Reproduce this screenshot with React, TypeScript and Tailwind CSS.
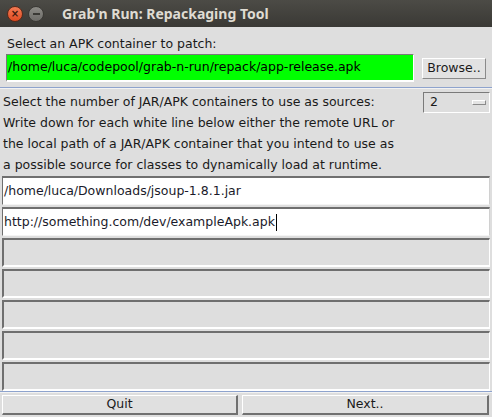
export default function App() {
  const sources = [
    '/home/luca/Downloads/jsoup-1.8.1.jar',
    'http://something.com/dev/exampleApk.apk',
  ];
  const blanks = [0, 1, 2, 3, 4];

  return (
    <div className="w-[492px] h-[417px] bg-[#dedede] flex flex-col overflow-hidden text-[12.5px] text-[#1a1a1a] font-['DejaVu_Sans',sans-serif]">
      {/* Title bar */}
      <div className="h-[27px] shrink-0 bg-gradient-to-b from-[#4c4b46] to-[#3a3935] flex items-center pl-[7px] gap-[5px]">
        <div className="w-[16px] h-[16px] rounded-full bg-gradient-to-b from-[#f37a53] to-[#df4a1f] border border-[#5a2a1a] flex items-center justify-center text-[#3b1a0e] text-[10px] leading-none font-bold">
          ×
        </div>
        <div className="w-[16px] h-[16px] rounded-full bg-gradient-to-b from-[#8c8b86] to-[#6d6c68] border border-[#3a3935] flex items-center justify-center">
          <div className="w-[7px] h-[2px] bg-[#3a3935]" />
        </div>
        <span className="ml-[13px] text-[14px] font-bold text-[#dfdbd2] font-['Noto_Sans',sans-serif]">
          Grab'n Run: Repackaging Tool
        </span>
      </div>

      {/* Target APK */}
      <div className="h-[60px] shrink-0 flex flex-col px-[6px] pt-[7px]">
        <div className="pl-[1px] h-[19px] leading-[19px]">Select an APK container to patch:</div>
        <div className="flex items-center mt-[1px]">
          <div className="w-[408px] h-[28px] bg-[#00ff00] border-t border-l border-[#7a7a7a] border-b-2 border-r border-b-white border-r-white flex items-center pl-[1px] text-black">
            /home/luca/codepool/grab-n-run/repack/app-release.apk
          </div>
          <button className="ml-[8px] w-[64px] h-[21px] bg-[#e2e2e2] border border-t-white border-l-white border-b-[#8a8a8a] border-r-[#8a8a8a] text-[#1a1a1a] flex items-center justify-center">
            Browse..
          </button>
        </div>
      </div>

      <div className="h-px shrink-0 bg-[#8ea3cd]" />
      <div className="h-px shrink-0 bg-[#f2f2f2]" />

      {/* Sources */}
      <div className="flex-1 flex flex-col px-[2px] pt-[2px]">
        <div className="flex justify-between">
          <div className="pl-[1px] leading-[21px]">
            <div>Select the number of JAR/APK containers to use as sources:</div>
            <div>Write down for each white line below either the remote URL or</div>
            <div>the local path of a JAR/APK container that you intend to use as</div>
            <div>a possible source for classes to dynamically load at runtime.</div>
          </div>
          <div className="w-[67px] h-[21px] mt-[1px] border border-t-[#7a7a7a] border-l-[#7a7a7a] border-b-white border-r-white bg-[#dedede] flex items-center justify-between pl-[6px] pr-[3px]">
            <span>2</span>
            <div className="w-[14px] h-[5px] border border-t-white border-l-white border-b-[#8a8a8a] border-r-[#8a8a8a] bg-[#e4e4e4]" />
          </div>
        </div>

        <div className="flex flex-col gap-[2px] mt-[1px]">
          {sources.map((s, i) => (
            <div
              key={s}
              className="h-[29px] bg-white border-t-2 border-l border-[#6f6f6f] border-b border-r border-b-[#f4f4f4] border-r-[#d0d0d0] flex items-center pl-[1px] text-[#1a1a2a]"
            >
              {s}
              {i === 1 && <span className="w-px h-[17px] bg-black ml-px" />}
            </div>
          ))}
          {blanks.map((b) => (
            <div
              key={b}
              className="h-[29px] bg-[#dedede] border-t-2 border-l-2 border-[#6f6f6f] border-b-2 border-r border-b-white border-r-white"
            />
          ))}
        </div>
      </div>

      <div className="h-px shrink-0 bg-[#8ea3cd]" />
      <div className="h-px shrink-0 bg-[#f2f2f2]" />

      {/* Buttons */}
      <div className="h-[24px] shrink-0 flex gap-[4px] px-[2px] pt-[2px] pb-[1px]">
        <button className="w-[236px] h-[20px] bg-[#e0e0e0] border border-t-white border-l-white border-b-[#707070] border-r-[#707070] border-b-2 border-r-2 text-[#1a1a1a] flex items-center justify-center">
          Quit
        </button>
        <button className="w-[247px] h-[20px] bg-[#e0e0e0] border border-t-white border-l-white border-b-[#707070] border-r-[#707070] border-b-2 border-r-2 text-[#1a1a1a] flex items-center justify-center">
          Next..
        </button>
      </div>
    </div>
  );
}
